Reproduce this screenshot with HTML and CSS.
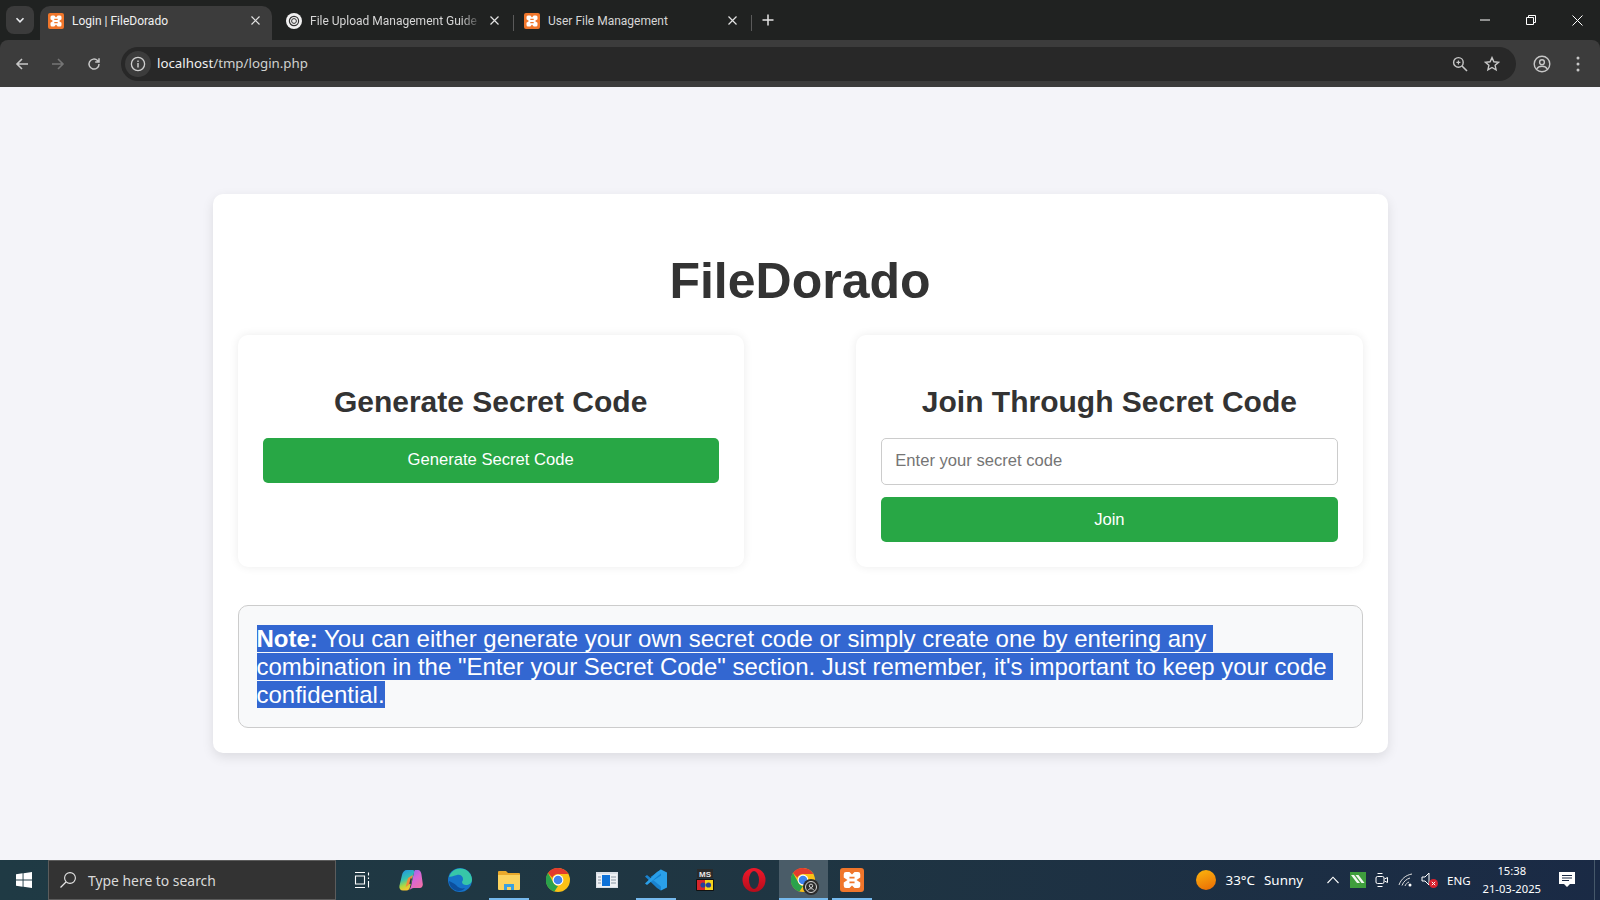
FILE: index.html
```html
<!DOCTYPE html>
<html lang="en">
<head>
    <meta charset="UTF-8">
    <meta name="viewport" content="width=device-width, initial-scale=1.0">
    <title>Login | FileDorado</title>
    <link rel="stylesheet" href="styles.css">
</head>
<body>
    <svg class="defs" width="0" height="0">
        <defs>
            <linearGradient id="copilot-left" x1="0" y1="0" x2="0.3" y2="1">
                <stop offset="0" stop-color="#1f8fe8"/>
                <stop offset="0.5" stop-color="#35c2b0"/>
                <stop offset="0.8" stop-color="#b7d83a"/>
                <stop offset="1" stop-color="#f7c62f"/>
            </linearGradient>
            <linearGradient id="copilot-right" x1="0" y1="0" x2="0.6" y2="1">
                <stop offset="0" stop-color="#7a6cf0"/>
                <stop offset="0.5" stop-color="#d766d8"/>
                <stop offset="1" stop-color="#f070a8"/>
            </linearGradient>
            <linearGradient id="opera-ring" x1="0" y1="0" x2="0" y2="1">
                <stop offset="0" stop-color="#f0182a"/>
                <stop offset="1" stop-color="#b50d1c"/>
            </linearGradient>
        </defs>
        <symbol id="xampp" viewBox="0 0 16 16">
            <rect width="16" height="16" rx="2" fill="#f0762b"/>
            <path fill-rule="evenodd" d="M4 2.600H6.300L8 4.400l1.700-1.800H12a1.500 1.500 0 0 1 1.500 1.500v2.200L11 8l2.500 1.700v2.200a1.500 1.500 0 0 1-1.500 1.500H9.700L8 11.600l-1.700 1.800H4a1.500 1.500 0 0 1-1.500-1.500V9.700L5 8 2.500 6.300V4.100A1.500 1.500 0 0 1 4 2.600zM6.300 5.800v1.200h3.400V5.800zM6.300 9v1.200h3.400V9z" fill="#fff"/>
        </symbol>
        <symbol id="chrome" viewBox="0 0 24 24">
            <circle cx="12" cy="12" r="12" fill="#fbc116"/>
            <path d="M12 0a12 12 0 0 1 10.400 6H12a6 6 0 0 0-5.600 3.800L2 5a12 12 0 0 1 10-5z" fill="#e33b2e"/>
            <path d="M2 5l5.200 9.200A6 6 0 0 0 12 18l-3.600 5.500A12 12 0 0 1 2 5z" fill="#2aa24b"/>
            <circle cx="12" cy="12" r="5.400" fill="#fff"/>
            <circle cx="12" cy="12" r="4.300" fill="#3f83ee"/>
        </symbol>
    </svg>

    <header class="browser">
        <div class="tabstrip">
            <div class="tab-menu">
                <svg width="10" height="10" viewBox="0 0 10 10"><path d="M1.500 3.200 5 6.800l3.500-3.600" fill="none" stroke="#e8eaed" stroke-width="1.600"/></svg>
            </div>
            <div class="tab active">
                <svg class="favicon" width="16" height="16"><use href="#xampp"/></svg>
                <span class="tab-title">Login | FileDorado</span>
                <svg class="tab-close" width="9" height="9" viewBox="0 0 9 9"><path d="M.5.500l8 8M8.500.500l-8 8" stroke="#e3e3e3" stroke-width="1.200"/></svg>
            </div>
            <div class="tab">
                <svg class="favicon" width="16" height="16" viewBox="0 0 16 16">
                    <circle cx="8" cy="8" r="8" fill="#f1f1f1"/>
                    <circle cx="8" cy="8" r="4.600" fill="none" stroke="#333" stroke-width="1.200"/>
                    <circle cx="8" cy="8" r="2.400" fill="none" stroke="#333" stroke-width="1"/>
                </svg>
                <span class="tab-title fade">File Upload Management Guide</span>
                <svg class="tab-close" width="9" height="9" viewBox="0 0 9 9"><path d="M.5.500l8 8M8.500.500l-8 8" stroke="#e3e3e3" stroke-width="1.200"/></svg>
            </div>
            <span class="tab-sep"></span>
            <div class="tab">
                <svg class="favicon" width="16" height="16"><use href="#xampp"/></svg>
                <span class="tab-title">User File Management</span>
                <svg class="tab-close" width="9" height="9" viewBox="0 0 9 9"><path d="M.5.500l8 8M8.500.500l-8 8" stroke="#e3e3e3" stroke-width="1.200"/></svg>
            </div>
            <span class="tab-sep"></span>
            <svg class="new-tab" width="12" height="12" viewBox="0 0 12 12"><path d="M6 .5v11M.5 6h11" stroke="#e3e3e3" stroke-width="1.500"/></svg>
            <div class="window-controls">
                <svg width="10" height="10" viewBox="0 0 10 10"><path d="M0 5h10" stroke="#fff"/></svg>
                <svg width="10" height="10" viewBox="0 0 10 10"><path d="M.5 2.500h7v7h-7zM2.500 2.500v-2h7v7h-2" fill="none" stroke="#fff"/></svg>
                <svg width="11" height="11" viewBox="0 0 11 11"><path d="M.5.500l10 10M10.500.500l-10 10" stroke="#fff"/></svg>
            </div>
        </div>
        <div class="toolbar">
            <svg class="nav-icon" width="16" height="16" viewBox="0 0 16 16"><path d="M14 8H3M8 3 3 8l5 5" fill="none" stroke="#c7c7c7" stroke-width="1.600"/></svg>
            <svg class="nav-icon" width="16" height="16" viewBox="0 0 16 16"><path d="M2 8h11M8 3l5 5-5 5" fill="none" stroke="#757575" stroke-width="1.600"/></svg>
            <svg class="nav-icon" width="16" height="16" viewBox="0 0 16 16"><path d="M13 8a5 5 0 1 1-1.500-3.500L13 6M13 2.200V6H9.200" fill="none" stroke="#c7c7c7" stroke-width="1.500"/></svg>
            <div class="omnibox">
                <span class="site-info">
                    <svg width="16" height="16" viewBox="0 0 16 16"><circle cx="8" cy="8" r="6.600" fill="none" stroke="#d0d0d0" stroke-width="1.300"/><path d="M8 7v4.500M8 4.400v1.500" stroke="#d0d0d0" stroke-width="1.400"/></svg>
                </span>
                <span class="url">localhost<span class="url-path">/tmp/login.php</span></span>
                <svg class="omni-icon" width="16" height="16" viewBox="0 0 16 16"><circle cx="6.400" cy="6.400" r="4.800" fill="none" stroke="#c7c7c7" stroke-width="1.400"/><path d="M10 10l5 5" stroke="#c7c7c7" stroke-width="1.600"/><path d="M4.400 6.400h4M6.400 4.400v4" stroke="#c7c7c7" stroke-width="1.200"/></svg>
                <svg class="omni-icon" width="16" height="16" viewBox="0 0 16 16"><path d="M8 1.600l1.900 4.200 4.600.5-3.400 3 1 4.500L8 11.500l-4.100 2.300 1-4.500-3.400-3 4.600-.5z" fill="none" stroke="#c7c7c7" stroke-width="1.400"/></svg>
            </div>
            <svg class="profile" width="18" height="18" viewBox="0 0 18 18"><circle cx="9" cy="9" r="7.800" fill="none" stroke="#c7c7c7" stroke-width="1.400"/><circle cx="9" cy="7.200" r="2.400" fill="none" stroke="#c7c7c7" stroke-width="1.400"/><path d="M3.800 14c1-2 3-2.800 5.200-2.800s4.200.8 5.200 2.800" fill="none" stroke="#c7c7c7" stroke-width="1.400"/></svg>
            <svg class="more" width="4" height="16" viewBox="0 0 4 16"><circle cx="2" cy="2" r="1.500" fill="#c7c7c7"/><circle cx="2" cy="8" r="1.500" fill="#c7c7c7"/><circle cx="2" cy="14" r="1.500" fill="#c7c7c7"/></svg>
        </div>
    </header>

    <main class="page">
        <div class="container">
            <h1>FileDorado</h1>
            <div class="cards">
                <section class="card">
                    <h2>Generate Secret Code</h2>
                    <button>Generate Secret Code</button>
                </section>
                <section class="card">
                    <h2>Join Through Secret Code</h2>
                    <input type="text" placeholder="Enter your secret code">
                    <button class="join">Join</button>
                </section>
            </div>
            <div class="note">
                <p><span class="selected"><strong>Note:</strong> You can either generate your own secret code or simply create one by entering any&nbsp;</span><br><span class="selected">combination in the "Enter your Secret Code" section. Just remember, it's important to keep your code&nbsp;</span><br><span class="selected">confidential.</span></p>
            </div>
        </div>
    </main>

    <footer class="taskbar">
        <div class="start">
            <svg width="16" height="16" viewBox="0 0 16 16"><path d="M0 2.300 6.600 1.300v6.300H0zM7.500 1.200 16 0v7.600H7.500zM0 8.500h6.600v6.300L0 13.800zM7.500 8.500H16V16l-8.500-1.200z" fill="#fff"/></svg>
        </div>
        <div class="search">
            <svg width="18" height="18" viewBox="0 0 18 18"><circle cx="11" cy="7" r="5.400" fill="none" stroke="#e6e6e6" stroke-width="1.100"/><path d="M7 11 1.500 16.500" stroke="#e6e6e6" stroke-width="1.300"/></svg>
            <span>Type here to search</span>
        </div>
        <div class="apps">
            <div class="app">
                <svg width="16" height="16" viewBox="0 0 16 16"><path d="M1 .5h10M1 15.500h10M1.500 4h9v8h-9zM14.500 .5v3M14.500 5.500v1.500M14.500 9v6.500" fill="none" stroke="#fff" stroke-width="1.100"/></svg>
            </div>
            <div class="app">
                <svg width="24" height="22" viewBox="0 0 24 22">
                    <path d="M16 1h3c2 0 3 2 3.400 4l1.400 10c.3 2-1 4-3 4h-6c-2 0-4 1.500-5 2.500 1-1 1.800-2.500 2.200-4L15 3c.2-1 .5-2 1-2z" fill="url(#copilot-right)"/>
                    <path d="M8 1h6c1 0 1.500 1 1.200 2L11 18c-.4 2-1.500 3.500-3.500 3.500H4c-2.500 0-4-2-3.600-4.500L3 6c.5-3 2.500-5 5-5z" fill="url(#copilot-left)"/>
                    <path d="M9 9l4.800-3-2.800 9-4.400 3z" fill="#f08a3c"/>
                    <path d="M12.300 9.500 11 15" stroke="#1f3542" stroke-width="1.400"/>
                </svg>
            </div>
            <div class="app">
                <svg width="24" height="24" viewBox="0 0 24 24">
                    <circle cx="12" cy="12" r="12" fill="#1673c9"/>
                    <path d="M1 9C3 2 10-1 16 1c5 2 8 6 8 11 0 3-3 5-6 5-2 0-4-1-4-3 0-1 1-1 1-3 0-3-3-5-6-4-4 1-7 2-8 2z" fill="#37c6a8"/>
                    <path d="M8 17c2 3 6 4 9 3-2 3-7 4-10 2-3-1-6-5-6-9 2 1 5 2 7 4z" fill="#0c4f9e"/>
                </svg>
            </div>
            <div class="app underlined">
                <svg width="22" height="20" viewBox="0 0 22 20">
                    <path d="M0 2a1 1 0 0 1 1-1h7l2 2h11a1 1 0 0 1 1 1v2H0z" fill="#e9a92b"/>
                    <path d="M0 5h22v14a1 1 0 0 1-1 1H1a1 1 0 0 1-1-1z" fill="#fbd35f"/>
                    <path d="M6 20v-6h10v6h-3v-3H9v3z" fill="#3aa0e0"/>
                </svg>
            </div>
            <div class="app">
                <svg width="24" height="24"><use href="#chrome"/></svg>
            </div>
            <div class="app">
                <svg width="22" height="16" viewBox="0 0 22 16">
                    <rect width="22" height="16" fill="#d9dfe6"/>
                    <rect x="1" y="2" width="20" height="13" fill="#eef1f4"/>
                    <rect x="6" y="3" width="8" height="11" fill="#0e72d8"/>
                    <path d="M15 5h5M15 8h5M15 11h5M2 5h3M2 8h3M2 11h3" stroke="#8a96a3"/>
                </svg>
            </div>
            <div class="app underlined">
                <svg width="24" height="24" viewBox="0 0 24 24">
                    <path d="M17 1.500 23 4.500v15l-6 3L7 13z" fill="#2a9fe8"/>
                    <path d="M17 1.500V7.500L10 12 6.500 9z" fill="#0f7fd0"/>
                    <path d="M1 8.500l2-1.500 14 11.500v4L13 20z" fill="#1a83cf"/>
                    <path d="M1 15.500l2 1.500L17 5.500v-4L13 4z" fill="#2a9fe8"/>
                </svg>
            </div>
            <div class="app">
                <svg width="18" height="22" viewBox="0 0 18 22">
                    <rect x="1" y="0" width="16" height="9" fill="#2a2a2a"/>
                    <text x="9" y="7.500" text-anchor="middle" class="ms-label">MS</text>
                    <rect y="10" width="18" height="12" rx="1" fill="#111"/>
                    <rect x="1" y="11" width="8" height="10" fill="#d8262c"/>
                    <rect x="9" y="11" width="8" height="10" fill="#f3d31c"/>
                    <circle cx="7" cy="16" r="2.600" fill="#24409c"/>
                    <circle cx="12.500" cy="16" r="2.600" fill="#24409c"/>
                </svg>
            </div>
            <div class="app">
                <svg width="24" height="24" viewBox="0 0 24 24"><ellipse cx="12" cy="12" rx="11.500" ry="12" fill="url(#opera-ring)"/><ellipse cx="12" cy="12" rx="5" ry="9" fill="#1f3340"/></svg>
            </div>
            <div class="app active">
                <svg width="24" height="24"><use href="#chrome"/></svg>
                <svg class="badge" width="16" height="16" viewBox="0 0 16 16">
                    <circle cx="8" cy="8" r="8" fill="#2c2c2c"/>
                    <circle cx="8" cy="8" r="5.500" fill="none" stroke="#d5d5d5"/>
                    <circle cx="8" cy="6.800" r="1.700" fill="none" stroke="#d5d5d5"/>
                    <path d="M4.800 11.500c.8-1.400 2-1.800 3.200-1.800s2.400.4 3.200 1.800" fill="none" stroke="#d5d5d5"/>
                </svg>
            </div>
            <div class="app underlined">
                <svg width="24" height="24"><use href="#xampp"/></svg>
            </div>
        </div>
        <div class="tray">
            <span class="sun"></span>
            <span class="temp">33°C</span>
            <span class="sky">Sunny</span>
            <svg class="chevron" width="12" height="8" viewBox="0 0 12 8"><path d="M.5 7 6 1.200 11.500 7" fill="none" stroke="#fff" stroke-width="1.100"/></svg>
            <svg class="tray-icon green" width="16" height="16" viewBox="0 0 16 16"><rect width="16" height="16" fill="#3f9e3d"/><path d="M1 3h3l6 8H7zM5.500 3h3l6 8h-3z" fill="#f2f8f0"/></svg>
            <svg class="tray-icon" width="14" height="18" viewBox="0 0 14 18"><rect x="1" y="5.500" width="8" height="7" rx="1.500" fill="none" stroke="#fff"/><path d="M9.500 8l3-1.500v5l-3-1.500M2.500 2.500h5M2.500 15.500h5" fill="none" stroke="#fff"/></svg>
            <svg class="tray-icon" width="16" height="14" viewBox="0 0 16 14"><path d="M1 12C3 6 8 2 14 1M4 12.500C5.500 8.500 8.500 6 12 5M7 13c.8-2 2-3.200 4-4" fill="none" stroke="#ddd"/><circle cx="12" cy="12" r="1.500" fill="#fff"/></svg>
            <svg class="tray-icon speaker" width="18" height="18" viewBox="0 0 18 18"><path d="M1 6h3l4-4v12l-4-4H1z" fill="none" stroke="#fff"/><circle cx="12.500" cy="12.500" r="4.500" fill="#d8222e"/><path d="M10.800 10.800l3.400 3.400M14.200 10.800l-3.400 3.400" stroke="#fff"/></svg>
            <span class="lang">ENG</span>
            <div class="clock">
                <span>15:38</span>
                <span>21-03-2025</span>
            </div>
            <svg class="notify" width="16" height="16" viewBox="0 0 16 16"><path d="M0 0h16v12h-5l-3 3-3-3H0z" fill="#fff"/><path d="M3 3.500h10M3 6h10M3 8.500h7" stroke="#1a2a45"/></svg>
            <span class="show-desktop"></span>
        </div>
    </footer>
</body>
</html>
```

FILE: styles.css
```css
* {
    box-sizing: border-box;
}
html, body {
    height: 100%;
}
body {
    margin: 0;
    display: flex;
    flex-direction: column;
    background-color: #f4f4f9;
    font-family: "Liberation Sans", Arial, sans-serif;
    overflow: hidden;
}
.defs {
    position: absolute;
}

/* browser chrome */
.browser {
    height: 87px;
    flex: none;
    background: #202221;
    font-family: "Noto Sans", sans-serif;
}
.tabstrip {
    height: 40px;
    display: flex;
    align-items: flex-end;
    padding-left: 6px;
}
.tab-menu {
    width: 28px;
    height: 28px;
    margin-bottom: 6px;
    margin-right: 6px;
    border-radius: 8px;
    background: #3b3b3b;
    display: flex;
    align-items: center;
    justify-content: center;
}
.tab {
    width: 238px;
    height: 34px;
    padding: 0 14px 5px 8px;
    display: flex;
    align-items: center;
    gap: 8px;
    color: #d6d6d6;
}
.tab.active {
    width: 232px;
    padding-right: 12px;
    background: #3c3c3c;
    border-radius: 10px 10px 0 0;
    color: #f0f0f0;
}
.tab.active + .tab {
    padding-left: 14px;
    width: 241px;
}
.tab-title {
    flex: 1;
    font-family: Roboto, sans-serif;
    font-size: 12px;
    white-space: nowrap;
    overflow: hidden;
}
.tab-title.fade {
    -webkit-mask-image: linear-gradient(to right, #000 88%, transparent);
    mask-image: linear-gradient(to right, #000 88%, transparent);
}
.tab-sep {
    width: 1px;
    height: 16px;
    margin-bottom: 9px;
    background: #5a5a5a;
}
.tab-sep + .tab {
    padding-left: 10px;
    width: 237px;
}
.new-tab {
    margin: 0 0 14px 10px;
}
.window-controls {
    margin-left: auto;
    height: 40px;
    display: flex;
    align-items: center;
    gap: 36px;
    padding-right: 17px;
}
.toolbar {
    height: 47px;
    background: #3c3c3c;
    border-radius: 8px 8px 0 0;
    display: flex;
    align-items: center;
    padding: 0 20px 0 14px;
}
.nav-icon {
    margin-right: 20px;
}
.nav-icon:nth-child(3) {
    margin-right: 19px;
}
.omnibox {
    flex: 1;
    height: 34px;
    background: #282828;
    border-radius: 17px;
    display: flex;
    align-items: center;
    padding: 0 16px 0 4px;
}
.site-info {
    width: 26px;
    height: 26px;
    border-radius: 50%;
    background: #3c3c3c;
    display: flex;
    align-items: center;
    justify-content: center;
    margin-right: 6px;
}
.url {
    flex: 1;
    font-size: 13.3px;
    padding-bottom: 2px;
    color: #f0f0f0;
}
.url-path {
    color: #d0d2d0;
}
.omni-icon {
    margin-left: 16px;
}
.profile {
    margin-left: 17px;
}
.more {
    margin-left: 25px;
}

/* page */
.page {
    flex: 1;
    display: flex;
    align-items: center;
    justify-content: center;
}
.container {
    width: 1175px;
    padding: 25px;
    background: #fff;
    border-radius: 10px;
    box-shadow: 0 4px 12px rgba(0,0,0,0.1);
}
h1 {
    margin: 33px 0 25px;
    text-align: center;
    font-size: 50px;
    color: #333;
}
.cards {
    display: flex;
    justify-content: space-between;
}
.card {
    width: 45%;
    height: 232px;
    padding: 25px;
    background: #fff;
    border-radius: 10px;
    box-shadow: 0 0 10px rgba(0,0,0,0.08);
}
h2 {
    margin: 23px 0 18px;
    text-align: center;
    font-size: 30px;
    line-height: 37px;
    color: #333;
}
input {
    display: block;
    width: 100%;
    height: 47px;
    padding: 0 13px 2px;
    margin-bottom: 12px;
    border: 1px solid #ccc;
    border-radius: 5px;
    font-family: inherit;
    font-size: 16.6px;
}
input::placeholder {
    color: #757575;
}
button {
    display: block;
    width: 100%;
    height: 45px;
    padding-bottom: 3px;
    background: #28a745;
    color: #fff;
    border: none;
    border-radius: 5px;
    font-family: inherit;
    font-size: 16.6px;
}
button.join {
    padding-bottom: 1px;
}
.note {
    margin-top: 38px;
    padding: 19px 18px 18px;
    background: #f8f9fa;
    border: 1px solid #ccc;
    border-radius: 10px;
}
.note p {
    margin: 0;
    font-size: 24px;
    line-height: 28px;
    color: #fff;
}
.selected {
    background: #3367d1;
}

/* windows taskbar */
.taskbar {
    height: 40px;
    flex: none;
    display: flex;
    align-items: stretch;
    background: linear-gradient(to right, #1f3a44, #1f3542 50%, #1a2a45);
    color: #fff;
    font-family: "Noto Sans", sans-serif;
}
.start {
    width: 48px;
    display: flex;
    align-items: center;
    justify-content: center;
}
.search {
    width: 288px;
    padding-left: 10px;
    display: flex;
    align-items: center;
    gap: 11px;
    background: #333;
    border: 1px solid #5c5c5c;
    font-size: 13.9px;
    color: #dadada;
}
.apps {
    display: flex;
    margin-left: 1.500px;
}
.app {
    position: relative;
    width: 49px;
    display: flex;
    align-items: center;
    justify-content: center;
}
.app.underlined::after, .app.active::after {
    content: "";
    position: absolute;
    left: 4px;
    right: 5px;
    bottom: 0;
    height: 2px;
    background: #76b9ed;
}
.app.active {
    background: #4a5c68;
}
.app.active::after {
    left: 0;
    right: 0;
}
.badge {
    position: absolute;
    left: 24px;
    top: 19px;
}
.ms-label {
    font-family: "Liberation Sans", sans-serif;
    font-size: 8px;
    font-weight: bold;
    fill: #e8e8e8;
}
.tray {
    flex: 1;
    display: flex;
    align-items: center;
    font-size: 13.4px;
    padding-left: 319px;
}
.sun {
    width: 20px;
    height: 20px;
    border-radius: 50%;
    background: linear-gradient(160deg, #fdb60d, #e86a05);
}
.temp {
    margin-left: 10px;
}
.sky {
    margin-left: 9px;
}
.chevron {
    margin-left: 24px;
}
.tray-icon {
    margin-left: 9px;
}
.tray-icon.green {
    margin-left: 11px;
}
.tray-icon.speaker {
    margin-left: 7px;
}
.lang {
    margin-left: 8px;
    font-size: 11.5px;
}
.clock {
    margin-left: 12px;
    display: flex;
    flex-direction: column;
    align-items: center;
    font-size: 11.2px;
    line-height: 18px;
}
.notify {
    margin-left: 18px;
}
.show-desktop {
    margin-left: auto;
    width: 1px;
    height: 100%;
    margin-right: 5px;
    background: #46586a;
}
```
